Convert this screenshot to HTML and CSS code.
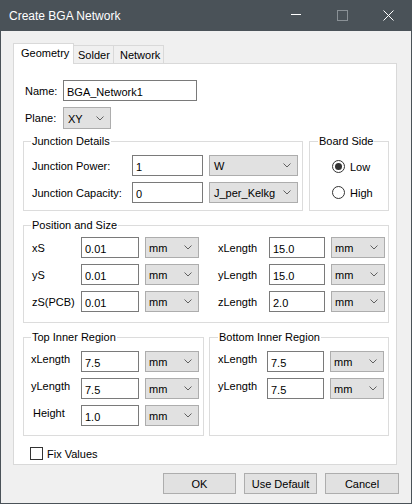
FILE: index.html
```html
<!DOCTYPE html>
<html lang="en">
<head>
<meta charset="UTF-8" />
<title>Create BGA Network</title>
<link rel="stylesheet" href="styles.css">
</head>
<body>
<div class="window">
  <!-- Title bar -->
  <div class="titlebar">
    <span class="caption">Create BGA Network</span>
    <div class="caption-btns">
      <span class="cbtn"><svg width="10" height="10"><line x1="0" y1="4.5" x2="10" y2="4.5" stroke="#fff" /></svg></span>
      <span class="cbtn"><svg width="11" height="11"><rect x="0.5" y="0.5" width="10" height="10" fill="none" stroke="#8a9196" /></svg></span>
      <span class="cbtn"><svg width="11" height="11"><path d="M0.5 0.5 L10.5 10.5 M10.5 0.5 L0.5 10.5" stroke="#fff" /></svg></span>
    </div>
  </div>

  <div class="client">
    <!-- Tabs -->
    <div class="tabs">
      <span class="tab active">Geometry</span>
      <span class="tab solder">Solder</span>
      <span class="tab network">Network</span>
    </div>

    <div class="panel">
      <div class="field name-row">
        <label class="lbl-short">Name:</label>
        <input class="text name-input" type="text" value="BGA_Network1" />
      </div>
      <div class="field plane-row">
        <label class="lbl-short">Plane:</label>
        <div class="combo plane-combo"><span>XY</span><svg width="8" height="5"><polyline points="0.5,0.5 4,4 7.5,0.5" fill="none" stroke="#606060" /></svg></div>
      </div>

      <div class="group-row top-groups">
        <div class="group junction">
          <span class="group-title">Junction Details</span>
          <div class="jrow">
            <label class="lbl-junc">Junction Power:</label>
            <input class="text junc-input" type="text" value="1" />
            <div class="combo junc-combo"><span>W</span><svg width="8" height="5"><polyline points="0.5,0.5 4,4 7.5,0.5" fill="none" stroke="#606060" /></svg></div>
          </div>
          <div class="jrow">
            <label class="lbl-junc">Junction Capacity:</label>
            <input class="text junc-input" type="text" value="0" />
            <div class="combo junc-combo"><span>J_per_Kelkg</span><svg width="8" height="5"><polyline points="0.5,0.5 4,4 7.5,0.5" fill="none" stroke="#606060" /></svg></div>
          </div>
        </div>

        <div class="group board">
          <span class="group-title">Board Side</span>
          <div class="radio-row"><span class="radio checked"></span><span>Low</span></div>
          <div class="radio-row"><span class="radio"></span><span>High</span></div>
        </div>
      </div>

      <div class="group position">
        <span class="group-title">Position and Size</span>
        <div class="prow">
          <label class="lbl-pos">xS</label>
          <input class="text pos-input" type="text" value="0.01" />
          <div class="combo unit"><span>mm</span><svg width="8" height="5"><polyline points="0.5,0.5 4,4 7.5,0.5" fill="none" stroke="#606060" /></svg></div>
          <label class="lbl-pos right">xLength</label>
          <input class="text pos-input narrow" type="text" value="15.0" />
          <div class="combo unit"><span>mm</span><svg width="8" height="5"><polyline points="0.5,0.5 4,4 7.5,0.5" fill="none" stroke="#606060" /></svg></div>
        </div>
        <div class="prow">
          <label class="lbl-pos">yS</label>
          <input class="text pos-input" type="text" value="0.01" />
          <div class="combo unit"><span>mm</span><svg width="8" height="5"><polyline points="0.5,0.5 4,4 7.5,0.5" fill="none" stroke="#606060" /></svg></div>
          <label class="lbl-pos right">yLength</label>
          <input class="text pos-input narrow" type="text" value="15.0" />
          <div class="combo unit"><span>mm</span><svg width="8" height="5"><polyline points="0.5,0.5 4,4 7.5,0.5" fill="none" stroke="#606060" /></svg></div>
        </div>
        <div class="prow">
          <label class="lbl-pos">zS(PCB)</label>
          <input class="text pos-input" type="text" value="0.01" />
          <div class="combo unit"><span>mm</span><svg width="8" height="5"><polyline points="0.5,0.5 4,4 7.5,0.5" fill="none" stroke="#606060" /></svg></div>
          <label class="lbl-pos right">zLength</label>
          <input class="text pos-input narrow" type="text" value="2.0" />
          <div class="combo unit"><span>mm</span><svg width="8" height="5"><polyline points="0.5,0.5 4,4 7.5,0.5" fill="none" stroke="#606060" /></svg></div>
        </div>
      </div>

      <div class="group-row inner-groups">
        <div class="group inner top-inner">
          <span class="group-title">Top Inner Region</span>
          <div class="irow">
            <label class="lbl-inner">xLength</label>
            <input class="text pos-input" type="text" value="7.5" />
            <div class="combo unit"><span>mm</span><svg width="8" height="5"><polyline points="0.5,0.5 4,4 7.5,0.5" fill="none" stroke="#606060" /></svg></div>
          </div>
          <div class="irow">
            <label class="lbl-inner">yLength</label>
            <input class="text pos-input" type="text" value="7.5" />
            <div class="combo unit"><span>mm</span><svg width="8" height="5"><polyline points="0.5,0.5 4,4 7.5,0.5" fill="none" stroke="#606060" /></svg></div>
          </div>
          <div class="irow">
            <label class="lbl-inner height-lbl">Height</label>
            <input class="text pos-input" type="text" value="1.0" />
            <div class="combo unit"><span>mm</span><svg width="8" height="5"><polyline points="0.5,0.5 4,4 7.5,0.5" fill="none" stroke="#606060" /></svg></div>
          </div>
        </div>

        <div class="group inner bottom-inner">
          <span class="group-title">Bottom Inner Region</span>
          <div class="irow">
            <label class="lbl-inner">xLength</label>
            <input class="text pos-input" type="text" value="7.5" />
            <div class="combo unit"><span>mm</span><svg width="8" height="5"><polyline points="0.5,0.5 4,4 7.5,0.5" fill="none" stroke="#606060" /></svg></div>
          </div>
          <div class="irow">
            <label class="lbl-inner">yLength</label>
            <input class="text pos-input" type="text" value="7.5" />
            <div class="combo unit"><span>mm</span><svg width="8" height="5"><polyline points="0.5,0.5 4,4 7.5,0.5" fill="none" stroke="#606060" /></svg></div>
          </div>
        </div>
      </div>

      <div class="check-row">
        <span class="checkbox"></span>
        <span>Fix Values</span>
      </div>
    </div>

    <!-- Dialog buttons -->
    <div class="buttons">
      <button class="btn">OK</button>
      <button class="btn">Use Default</button>
      <button class="btn cancel">Cancel</button>
    </div>
  </div>
</div>
</body>
</html>
```

FILE: styles.css
```css
* {
  box-sizing: border-box;
  margin: 0;
  padding: 0;
}
body {
  background: #4a5258;
  font-family: "Liberation Sans", Arial, sans-serif;
  font-size: 11px;
  color: #000;
}
.window {
  width: 412px;
  height: 504px;
  border: 1px solid #4a5258;
  background: #f0f0f0;
  display: flex;
  flex-direction: column;
}
.titlebar {
  height: 30px;
  flex-shrink: 0;
  background: #4a5258;
  color: #fff;
  display: flex;
  align-items: center;
}
.caption {
  flex: 1;
  padding-left: 8px;
  font-size: 12px;
  padding-bottom: 1px;
}
.caption-btns {
  display: flex;
  height: 100%;
}
.cbtn {
  width: 46px;
  display: flex;
  align-items: center;
  justify-content: center;
  padding-bottom: 2px;
}
.client {
  flex: 1;
  padding: 12px 14px 0 12px;
}

/* Tabs */
.tabs {
  display: flex;
  align-items: flex-end;
  height: 20px;
}
.tab {
  height: 18px;
  background: #f0f0f0;
  border-top: 1px solid #d9d9d9;
  border-right: 1px solid #d9d9d9;
  line-height: 17px;
  padding-top: 1px;
}
.tab.active {
  position: relative;
  z-index: 1;
  width: 61px;
  height: 21px;
  margin-bottom: -1px;
  background: #fff;
  border-left: 1px solid #d9d9d9;
  padding-left: 7px;
  padding-top: 0;
  line-height: 19px;
}
.tab.solder {
  width: 40px;
  padding-left: 4px;
}
.tab.network {
  width: 50px;
  padding-left: 6px;
}

.panel {
  height: 402px;
  background: #fff;
  border: 1px solid #d9d9d9;
  padding: 16px 0 0 9px;
}

/* Inputs */
.text {
  height: 21px;
  border: 1px solid #7a7a7a;
  background: #fff;
  font: inherit;
  color: #000;
  padding: 2px 3px 0;
  outline: none;
}
.combo {
  height: 21px;
  background: #e1e1e1;
  border: 1px solid #adadad;
  display: flex;
  align-items: center;
  justify-content: space-between;
  padding: 1px 6px 0 3px;
}
.combo svg {
  margin-top: -1px;
}

.field {
  display: flex;
  align-items: center;
  margin-left: 2px;
}
.plane-row {
  margin-top: 6px;
}
.lbl-short {
  width: 38px;
}
.name-input {
  width: 134px;
}
.plane-combo {
  width: 48px;
  height: 22px;
  padding-left: 4px;
}

/* Group boxes */
.group {
  position: relative;
  border: 1px solid #dcdcdc;
}
.group-title {
  position: absolute;
  top: -7px;
  left: 7px;
  background: #fff;
  padding: 0 1px;
  line-height: 13px;
}
.group-row {
  display: flex;
}
.top-groups {
  margin-top: 12px;
}
.junction {
  width: 280px;
  height: 70px;
  padding: 13px 0 0 8px;
}
.jrow {
  display: flex;
  align-items: center;
  margin-bottom: 6px;
}
.lbl-junc {
  width: 100px;
}
.junc-input {
  width: 71px;
}
.junc-combo {
  width: 89px;
  margin-left: 6px;
  padding-left: 4px;
}
.board {
  width: 80px;
  height: 70px;
  margin-left: 6px;
  padding: 14px 0 0 22px;
}
.board .group-title {
  left: 8px;
}
.radio-row {
  display: flex;
  align-items: center;
  height: 21px;
  margin-bottom: 5px;
}
.radio {
  width: 13px;
  height: 13px;
  border: 1px solid #333;
  border-radius: 50%;
  background: #fff;
  margin-right: 5px;
  display: flex;
  align-items: center;
  justify-content: center;
}
.radio.checked::after {
  content: "";
  width: 7px;
  height: 7px;
  border-radius: 50%;
  background: #333;
}

.position {
  width: 366px;
  height: 98px;
  margin-top: 14px;
  padding: 11px 0 0 8px;
}
.prow {
  display: flex;
  align-items: center;
  margin-bottom: 6px;
}
.lbl-pos {
  width: 49px;
}
.lbl-pos.right {
  width: 51px;
  margin-left: 19px;
}
.pos-input {
  width: 58px;
}
.pos-input.narrow {
  width: 56px;
}
.unit {
  width: 54px;
  margin-left: 6px;
}

.inner-groups {
  margin-top: 14px;
}
.inner {
  height: 99px;
  padding-top: 13px;
}
.top-inner {
  width: 181px;
  padding-left: 7px;
}
.bottom-inner {
  width: 180px;
  margin-left: 5px;
  padding-left: 8px;
}
.bottom-inner .group-title {
  left: 8px;
}
.irow {
  display: flex;
  align-items: center;
  margin-bottom: 6px;
}
.lbl-inner {
  width: 50px;
  padding-bottom: 5px;
}
.bottom-inner .lbl-inner {
  width: 49px;
}
.height-lbl {
  padding-left: 2px;
}
.bottom-inner .pos-input {
  width: 57px;
}

.check-row {
  display: flex;
  align-items: center;
  margin-top: 11px;
  margin-left: 7px;
  height: 13px;
}
.checkbox {
  width: 13px;
  height: 13px;
  border: 1px solid #333;
  background: #fff;
  margin-right: 4px;
}

/* Dialog buttons */
.buttons {
  display: flex;
  justify-content: flex-end;
  margin-top: 8px;
  margin-right: -2px;
}
.btn {
  width: 73px;
  height: 21px;
  margin-left: 8px;
  background: #e1e1e1;
  border: 1px solid #adadad;
  font: inherit;
  color: #000;
}
.btn.cancel {
  width: 74px;
}
```
